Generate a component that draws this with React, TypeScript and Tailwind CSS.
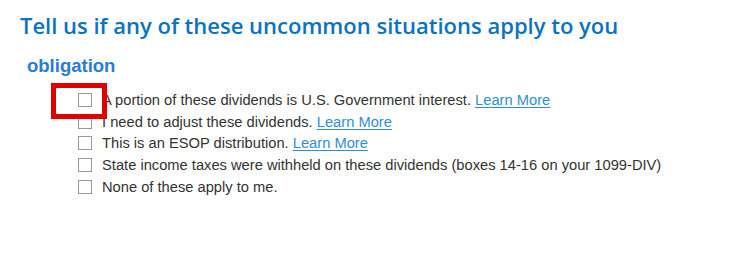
import React from "react";

const items: { text: string; link?: boolean }[] = [
  { text: "A portion of these dividends is U.S. Government interest.", link: true },
  { text: "I need to adjust these dividends.", link: true },
  { text: "This is an ESOP distribution.", link: true },
  { text: "State income taxes were withheld on these dividends (boxes 14-16 on your 1099-DIV)" },
  { text: "None of these apply to me." },
];

export default function App() {
  return (
    <div className="relative w-[738px] h-[263px] bg-white overflow-hidden">
      <div className="pl-[20px] pt-[10px]">
        <h1
          className="text-[22px] leading-[30px] font-semibold text-[#0a72c2]"
          style={{ fontFamily: '"Open Sans", sans-serif' }}
        >
          Tell us if any of these uncommon situations apply to you
        </h1>
        <h2
          className="mt-[14px] ml-[7px] text-[18.5px] leading-[24px] font-bold text-[#2a7bd6]"
          style={{ fontFamily: '"Liberation Sans", Arial, sans-serif' }}
        >
          obligation
        </h2>
        <ul
          className="mt-[11px] ml-[58px] flex flex-col"
          style={{ fontFamily: '"Liberation Sans", Arial, sans-serif' }}
        >
          {items.map((it, i) => (
            <li key={i} className="flex items-center h-[21.75px] text-[14.7px] text-[#333333]">
              <span className="w-[14px] h-[14px] border border-[#999999] bg-white shrink-0" />
              <span className="ml-[10px] whitespace-nowrap">
                {it.text}
                {it.link && (
                  <>
                    {" "}
                    <a className="text-[#2f8fd6] underline underline-offset-[2px]">Learn More</a>
                  </>
                )}
              </span>
            </li>
          ))}
        </ul>
      </div>
      <div className="absolute left-[51px] top-[83px] w-[56px] h-[36px] border-[5px] border-[#e00000]" />
    </div>
  );
}
